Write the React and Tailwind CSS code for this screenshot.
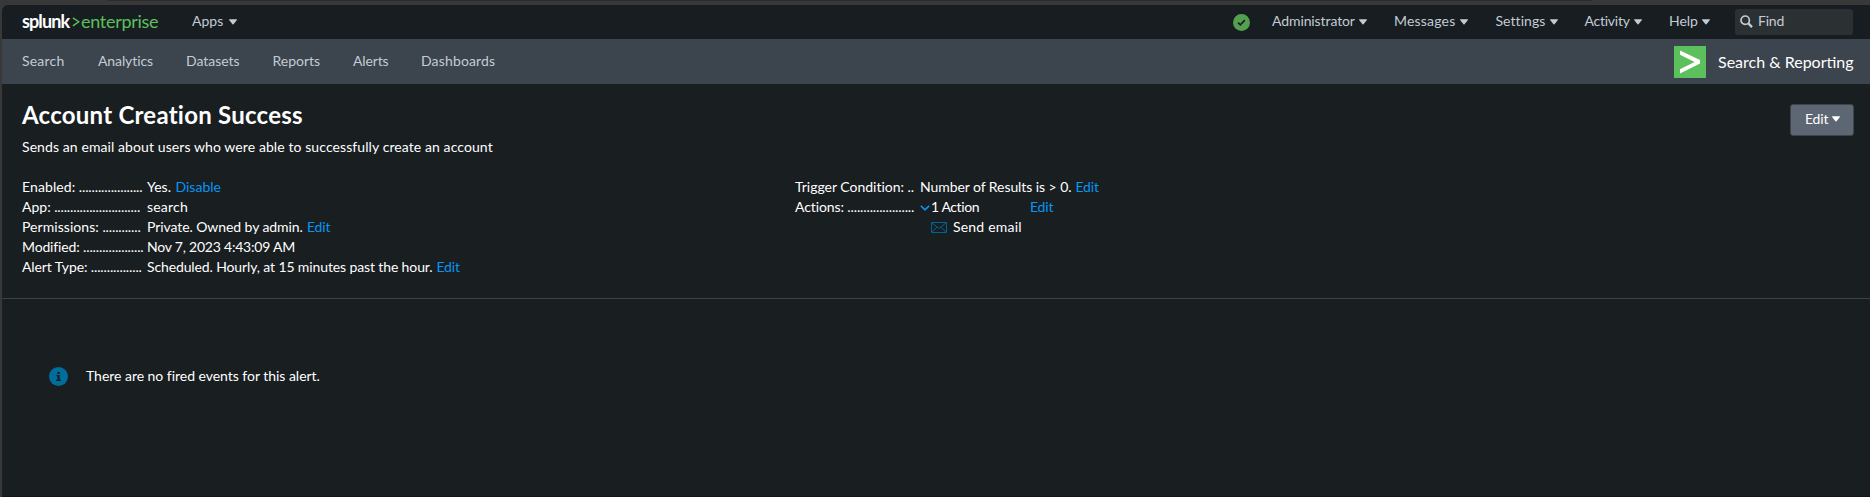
function Caret({ className = "" }) {
  return (
    <svg viewBox="0 0 8 6" className={`h-[6px] w-[8px] shrink-0 ${className}`} fill="currentColor" aria-hidden="true">
      <path d="M0.5 0.3h7c.4 0 .6.4.4.7L4.5 5.2c-.3.3-.7.3-1 0L.1 1C-.1.7.1.3.5.3z" />
    </svg>
  );
}

const navItems = [
  { label: "Search", box: "w-[76px]", tracking: "tracking-[0.2px]" },
  { label: "Analytics", box: "w-[88px]", tracking: "tracking-[-0.1px]" },
  { label: "Datasets", box: "w-[86.5px]", tracking: "tracking-[-0.02px]" },
  { label: "Reports", box: "w-[80.5px]", tracking: "tracking-[-0.02px]" },
  { label: "Alerts", box: "w-[68px]", tracking: "tracking-[-0.13px]" },
  { label: "Dashboards", box: "w-[80px]", tracking: "tracking-[0.15px]" },
];

const menuItems = [
  { label: "Administrator", box: "w-[122px]", text: "w-[86.5px]", tracking: "tracking-[-0.1px]" },
  { label: "Messages", box: "w-[101.5px]", text: "w-[66px]", tracking: "tracking-[0.2px]" },
  { label: "Settings", box: "w-[89px]", text: "w-[54px]", tracking: "tracking-[0.06px]" },
  { label: "Activity", box: "w-[84.5px]", text: "w-[49px]", tracking: "tracking-[-0.25px]" },
  { label: "Help", box: "w-[66px]", text: "w-[33px]", tracking: "tracking-[-0.05px]" },
];

function Row({ label, tracking, dots, children }) {
  return (
    <div className="flex h-5">
      <dt className="mr-[4px] w-[121px] whitespace-nowrap">
        <span className={tracking}>{label}</span>
        <span className="tracking-[-0.12px]"> {".".repeat(dots)}</span>
      </dt>
      <dd className="flex whitespace-nowrap">{children}</dd>
    </div>
  );
}

function Link({ children, className = "" }) {
  return (
    <a href="#" className={`text-[#0796f2] ${className}`}>
      {children}
    </a>
  );
}

function TopBar() {
  return (
    <header className="flex h-[34px] items-center rounded-tl-[6px] bg-[#171d21] pl-5 text-[#c3cbd4]">
      <div className="flex w-[170px] items-center text-[18px] leading-[32px]">
        <span className="w-[50px] pb-[2px] font-bold tracking-[-0.9px] text-white">splunk</span>
        <svg viewBox="0 0 8 11" className="mr-[1px] h-[10px] w-[8px]" fill="none" stroke="#5cc05c" strokeWidth="1.6" aria-hidden="true">
          <path d="M0.6 1l6.4 4.2L0.6 9.8" />
        </svg>
        <span className="pb-[2px] tracking-[-0.28px] text-[#5cc05c]">enterprise</span>
      </div>
      <button className="flex items-center pb-[2px]">
        <span className="w-[37px] text-left">Apps</span>
        <Caret className="mt-px" />
      </button>
      <div className="ml-auto flex items-center">
        <svg viewBox="0 0 17 17" className="mr-[22.5px] h-[17px] w-[17px]" aria-hidden="true">
          <circle cx="8.5" cy="8.5" r="8.5" fill="#53a051" />
          <path d="M5 8.6l2.4 2.3 4.4-4.7" fill="none" stroke="#171d21" strokeWidth="1.7" />
        </svg>
        {menuItems.map((m) => (
          <button key={m.label} className={`flex items-center pb-[2px] ${m.box}`}>
            <span className={`shrink-0 text-left ${m.text} ${m.tracking}`}>{m.label}</span>
            <Caret className="mt-px" />
          </button>
        ))}
        <div className="mr-[17px] flex h-[26px] w-[118px] items-center rounded-[3px] bg-[#2b3033] pb-[2px] pl-[5px]">
          <svg viewBox="0 0 13 13" className="mr-[5px] h-[13px] w-[13px]" fill="none" stroke="currentColor" aria-hidden="true">
            <circle cx="5.2" cy="5.2" r="4.2" strokeWidth="1.7" />
            <path d="M8.4 8.4l3.6 3.7" strokeWidth="2.3" />
          </svg>
          <span className="tracking-[-0.2px]">Find</span>
        </div>
      </div>
    </header>
  );
}

function AppNav() {
  return (
    <nav className="flex h-[45px] items-center bg-[#3c444d] pl-5 text-[#c3cbd4]">
      {navItems.map((n) => (
        <a key={n.label} href="#" className={`pb-[2px] ${n.box} ${n.tracking}`}>
          {n.label}
        </a>
      ))}
      <div className="ml-auto flex items-center">
        <svg viewBox="0 0 32 32" className="mr-[12px] h-8 w-8" aria-hidden="true">
          <rect width="32" height="32" fill="#5cc05c" />
          <path d="M6 4.5L26 14v3.6L6 27.5v-4.3L20.6 15.9 6 8.8z" fill="#fff" />
        </svg>
        <span className="w-[152px] text-[16px] leading-6 whitespace-nowrap text-white">Search &amp; Reporting</span>
      </div>
    </nav>
  );
}

export default function App() {
  return (
    <div className="flex h-[497px] w-full flex-col overflow-hidden bg-[#383838] pl-[2px] font-['Lato','Liberation_Sans',sans-serif] text-[14px] leading-5 text-white">
      <div className="h-[5px] shrink-0 pr-[278px] pl-[106px]">
        <div className="h-px bg-[#2b2b2b]" />
      </div>
      <TopBar />
      <AppNav />
      <main className="flex flex-1 flex-col border-b border-[#111418] bg-[#191e21]">
        <section className="h-[215px] shrink-0 border-b border-[#364450] pt-5 pr-4 pl-5">
          <div className="flex items-start justify-between">
            <div>
              <h1 className="text-[24px] leading-[22px] font-bold tracking-[0.24px]">Account Creation Success</h1>
              <p className="mt-[11px] tracking-[0.09px]">Sends an email about users who were able to successfully create an account</p>
            </div>
            <button className="flex h-8 w-16 items-center rounded-[3px] border border-[#3c444d] bg-[#5c6773] pb-[2px] pl-[14px]">
              <span className="w-[27px] text-left tracking-[-0.2px]">Edit</span>
              <Caret />
            </button>
          </div>
          <div className="mt-5 flex">
            <dl className="w-[773px]">
              <Row label="Enabled:" tracking="tracking-[0.1px]" dots={20}>
                <span className="w-[28.5px]">Yes.</span>
                <Link>Disable</Link>
              </Row>
              <Row label="App:" dots={27}>
                <span className="tracking-[0.2px]">search</span>
              </Row>
              <Row label="Permissions:" tracking="tracking-[0.06px]" dots={12}>
                <span className="w-[160px] tracking-[-0.08px]">Private. Owned by admin.</span>
                <Link className="tracking-[-0.2px]">Edit</Link>
              </Row>
              <Row label="Modified:" tracking="tracking-[-0.15px]" dots={19}>
                <span className="tracking-[-0.22px]">Nov 7, 2023 4:43:09 AM</span>
              </Row>
              <Row label="Alert Type:" tracking="tracking-[-0.1px]" dots={16}>
                <span className="w-[289.5px] tracking-[-0.12px]">Scheduled. Hourly, at 15 minutes past the hour.</span>
                <Link className="tracking-[-0.2px]">Edit</Link>
              </Row>
            </dl>
            <dl>
              <Row label="Trigger Condition:" tracking="tracking-[-0.01px]" dots={2}>
                <span className="w-[155.5px] tracking-[-0.07px]">Number of Results is &gt; 0.</span>
                <Link className="tracking-[-0.2px]">Edit</Link>
              </Row>
              <Row label="Actions:" tracking="tracking-[-0.1px]" dots={21}>
                <div>
                  <div className="flex">
                    <svg viewBox="0 0 10 6" className="mt-[8px] mr-[1px] h-[6px] w-[10px]" fill="none" stroke="#0796f2" strokeWidth="1.6" aria-hidden="true">
                      <path d="M0.8 0.7L5 4.8 9.2 0.7" />
                    </svg>
                    <span className="w-[99px] tracking-[-0.4px]">1 Action</span>
                    <Link className="tracking-[-0.2px]">Edit</Link>
                  </div>
                  <div className="flex pl-[11px]">
                    <svg viewBox="0 0 16 11" className="mt-[5px] mr-[6px] h-[11px] w-4" fill="none" stroke="#006297" strokeWidth="1" aria-hidden="true">
                      <path d="M0.5 0.5h15v10H0.5zM0.8 0.8L8 6.4l7.2-5.6M0.8 10.2l5.2-5M15.2 10.2L10 5.2" />
                    </svg>
                    <span className="tracking-[0.2px]">Send email</span>
                  </div>
                </div>
              </Row>
            </dl>
          </div>
        </section>
        <section className="flex items-center pt-[68px] pl-[47px]">
          <svg viewBox="0 0 19 19" className="mr-[18px] h-[19px] w-[19px]" aria-hidden="true">
            <circle cx="9.5" cy="9.5" r="9.5" fill="#006d9c" />
            <path d="M8.4 5h2.3v2H8.4zM7.4 8h3.3v4.8h1.2V14H7.1v-1.2h1.3V9.2h-1z" fill="#191e21" />
          </svg>
          <p className="-mt-[2px] tracking-[-0.03px]">There are no fired events for this alert.</p>
        </section>
      </main>
    </div>
  );
}
